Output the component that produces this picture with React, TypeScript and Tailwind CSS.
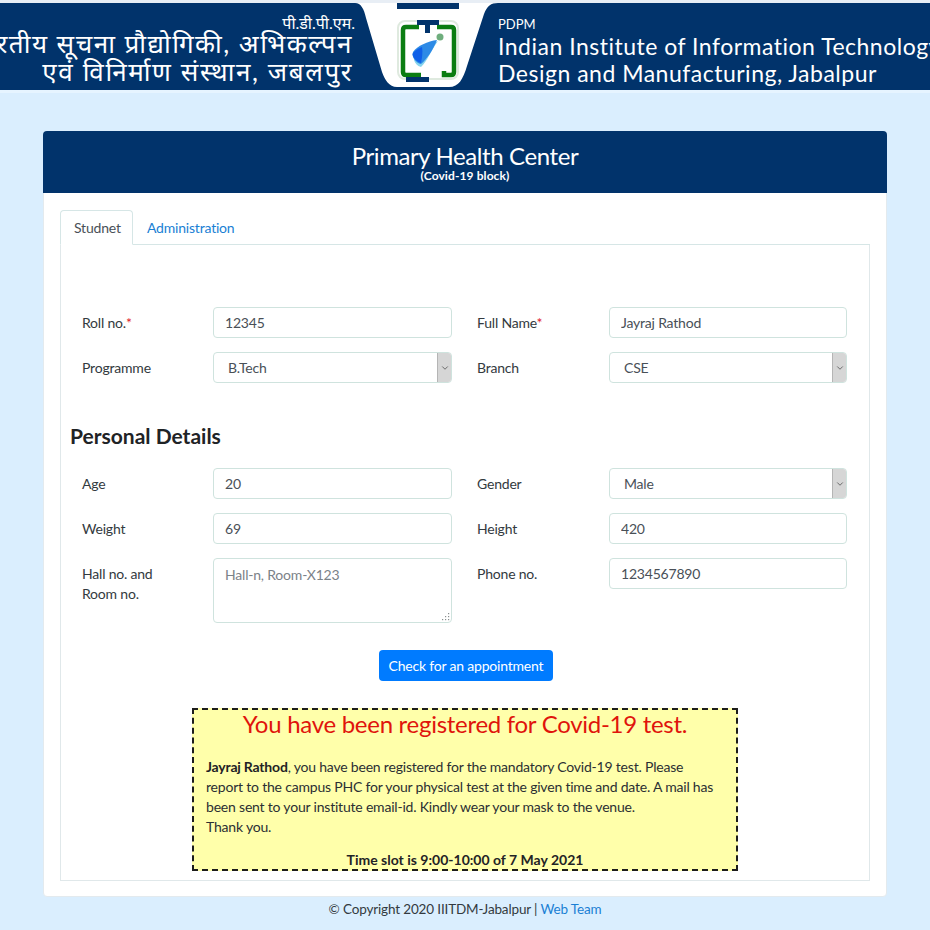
import { ChevronDown } from 'lucide-react';

const Logo = () => (
  <svg viewBox="0 0 143 90" className="h-[90px] w-[143px] shrink-0">
    <path d="M0 0 H143 V3 C136 3 132 6 129 14 L112 66 C108 79 104 87 94 87 H42 C34 87 30 80 27 72 L11 18 C9 9 6 3 0 3 Z" fill="#ffffff" />
    <rect x="42" y="3" width="62" height="6" fill="#01336b" />
    <rect x="43" y="21" width="60" height="58" rx="7" fill="none" stroke="#dfeadf" strokeWidth="2" />
    <path d="M64 27 H51 Q48 27 48 30 V72 Q48 75 51 75 H66 M82 27 H96 Q99 27 99 30 V72 Q99 75 96 75 H89 V71" fill="none" stroke="#0b7d12" strokeWidth="4.5" />
    <rect x="62" y="20" width="22" height="5" fill="#01336b" />
    <rect x="70" y="25" width="5" height="8" fill="#01336b" />
    <rect x="51" y="77" width="23" height="5" fill="#01336b" />
    <circle cx="85" cy="37" r="3.5" fill="#6fae7d" />
    <path d="M83 41 C76 50 72 62 66 67 C62 66 60 63 59 60 L70 48 Z" fill="#86d4ee" />
    <path d="M82 40 C73 41 62 46 58 52 C56 57 61 63 66 64 C72 59 78 50 82 40 Z" fill="#2d8ae6" />
    <path d="M67 47 C62 49 59 51 57.5 54 C58 58 62 62 66 63 C67 58 68 52 67 47 Z" fill="#0f5fe8" />
  </svg>
);

const inputClass =
  'h-[31px] w-full rounded border border-[#cfe3de] bg-white px-[11px] text-[14px] tracking-[-0.2px] text-[#495057] outline-none';

const Input = ({ value }: { value: string }) => <input readOnly value={value} className={inputClass} />;

const Select = ({ value }: { value: string }) => (
  <div className="flex h-[31px] w-full items-center justify-between overflow-hidden rounded border border-[#cfe3de] bg-white pl-[14px] text-[14px] tracking-[-0.2px] text-[#495057]">
    <span>{value}</span>
    <span className="flex h-full w-[14px] items-center justify-center border-l border-[#b5b5b5] bg-[#d6d6d6]">
      <ChevronDown className="h-[10px] w-[10px] text-[#555]" />
    </span>
  </div>
);

const Row = ({ children, className = '' }: { children: React.ReactNode; className?: string }) => (
  <div className={`grid grid-cols-[370px_370px] gap-x-[25px] ${className}`}>{children}</div>
);

const Field = ({ label, required, right, children }: { label: React.ReactNode; required?: boolean; right?: boolean; children: React.ReactNode }) => (
  <div className="flex">
    <label className={`${right ? 'w-[132px]' : 'w-[131px]'} shrink-0 pt-[6px] text-[14px] leading-[20px] tracking-[-0.2px] text-[#333a40]`}>
      {label}
      {required && <span className="text-[#e0202c]">*</span>}
    </label>
    <div className="flex-1">{children}</div>
  </div>
);

export default function App() {
  return (
    <div className="h-[930px] overflow-hidden bg-[#daeefe] font-['Lato','Noto_Sans',sans-serif]">
      <header className="flex h-[90px] justify-center overflow-hidden border-t-[3px] border-[#e8eef5] bg-[#01336b] text-white">
        <div className="flex w-[355px] shrink-0 flex-col items-end whitespace-nowrap pr-[2px] pt-[14px] text-right">
          <span className="-mr-[2px] text-[16px] leading-[12px]">पी.डी.पी.एम.</span>
          <span className="text-[26px] leading-[28px] tracking-[1.5px]">भारतीय सूचना प्रौद्योगिकी, अभिकल्पन</span>
          <span className="text-[26px] leading-[28px] tracking-[1.6px]">एवं विनिर्माण संस्थान, जबलपुर</span>
        </div>
        <div className="-mt-[3px]">
          <Logo />
        </div>
        <div className="flex w-[432px] shrink-0 flex-col whitespace-nowrap pt-[13px]">
          <span className="text-[13px] leading-[17px]">PDPM</span>
          <span className="text-[23px] leading-[27px] tracking-[0.5px]">Indian Institute of Information Technology</span>
          <span className="text-[23px] leading-[27px] tracking-[0.5px]">Design and Manufacturing, Jabalpur</span>
        </div>
      </header>
      <div className="h-[3px] bg-[#e6f4ff]" />

      <main className="px-[43px] pt-[38px]">
        <section className="h-[766px] rounded border border-[#e3eaee] bg-white">
          <div className="-m-px h-[62px] rounded-t bg-[#01336b] pt-[11px] text-center text-white">
            <h1 className="text-[24px] leading-[28px] tracking-[-0.4px]">Primary Health Center</h1>
            <p className="text-[12px] font-bold leading-[11px] tracking-[0.1px]">(Covid-19 block)</p>
          </div>

          <div className="px-[16px] pt-[18px]">
            <div className="flex h-[35px] border-b border-[#d6e6e6] text-[14px] tracking-[-0.2px]">
              <span className="h-[35px] w-[73px] rounded-t border border-[#d6e6e6] border-b-white bg-white px-[13px] pt-[6px] text-[#495057]">Studnet</span>
              <span className="px-[14px] pt-[7px] text-[#1a7fd4]">Administration</span>
            </div>

            <div className="h-[636px] border border-t-0 border-[#e0e8ea] px-[21px] pt-[62px]">
              <Row>
                <Field label="Roll no." required><Input value="12345" /></Field>
                <Field right label="Full Name" required><Input value="Jayraj Rathod" /></Field>
              </Row>
              <Row className="mt-[14px]">
                <Field label="Programme"><Select value="B.Tech" /></Field>
                <Field right label="Branch"><Select value="CSE" /></Field>
              </Row>

              <h2 className="-ml-[12px] mt-[39px] text-[21px] font-bold leading-[28px] text-[#1f2326]">Personal Details</h2>

              <Row className="mt-[18px]">
                <Field label="Age"><Input value="20" /></Field>
                <Field right label="Gender"><Select value="Male" /></Field>
              </Row>
              <Row className="mt-[14px]">
                <Field label="Weight"><Input value="69" /></Field>
                <Field right label="Height"><Input value="420" /></Field>
              </Row>
              <Row className="mt-[14px]">
                <Field label={<>Hall no. and<br />Room no.</>}>
                  <div className="relative">
                    <textarea
                      readOnly
                      placeholder="Hall-n, Room-X123"
                      className="block h-[65px] w-full resize-none rounded border border-[#cfe3de] bg-white px-[11px] py-[6px] text-[14px] leading-[20px] tracking-[-0.2px] text-[#495057] outline-none placeholder:text-[#7b8288]"
                    />
                    <svg viewBox="0 0 8 8" className="absolute bottom-[2px] right-[2px] h-[8px] w-[8px]" fill="#8a8f8f">
                      <rect x="6" y="0" width="1.2" height="1.2" />
                      <rect x="3" y="3" width="1.2" height="1.2" />
                      <rect x="6" y="3" width="1.2" height="1.2" />
                      <rect x="0" y="6" width="1.2" height="1.2" />
                      <rect x="3" y="6" width="1.2" height="1.2" />
                      <rect x="6" y="6" width="1.2" height="1.2" />
                    </svg>
                  </div>
                </Field>
                <Field right label="Phone no."><Input value="1234567890" /></Field>
              </Row>

              <div className="mt-[27px] flex justify-center pl-[2px]">
                <button className="h-[31px] w-[174px] rounded bg-[#007bff] text-[14px] tracking-[-0.2px] text-white">Check for an appointment</button>
              </div>

              <div className="ml-[110px] mt-[27px] h-[163px] w-[546px] border-2 border-dashed border-[#1c1c1c] bg-[#ffffaa] pl-[12px] pr-[20px] text-[14px] leading-[20px] tracking-[-0.2px] text-[#2b2f33]">
                <h3 className="-mr-[8px] text-center text-[24px] leading-[27px] tracking-[-0.28px] text-[#e0140c]">You have been registered for Covid-19 test.</h3>
                <p className="mt-[20px]">
                  <b className="text-[#1f2326]">Jayraj Rathod</b>, you have been registered for the mandatory Covid-19 test. Please report to the campus PHC for your physical test at the given time and date. A mail has been sent to your institute email-id. Kindly wear your mask to the venue.
                  <br />
                  Thank you.
                </p>
                <p className="-mr-[8px] mt-[13px] text-center font-bold tracking-[0px] text-[#1f2326]">Time slot is 9:00-10:00 of 7 May 2021</p>
              </div>
            </div>
          </div>
        </section>

        <footer className="mt-[2px] text-center text-[13.5px] leading-[20px] tracking-[-0.15px] text-[#333a40]">
          © Copyright 2020 IIITDM-Jabalpur | <span className="text-[#1a7fd4]">Web Team</span>
        </footer>
      </main>
    </div>
  );
}
